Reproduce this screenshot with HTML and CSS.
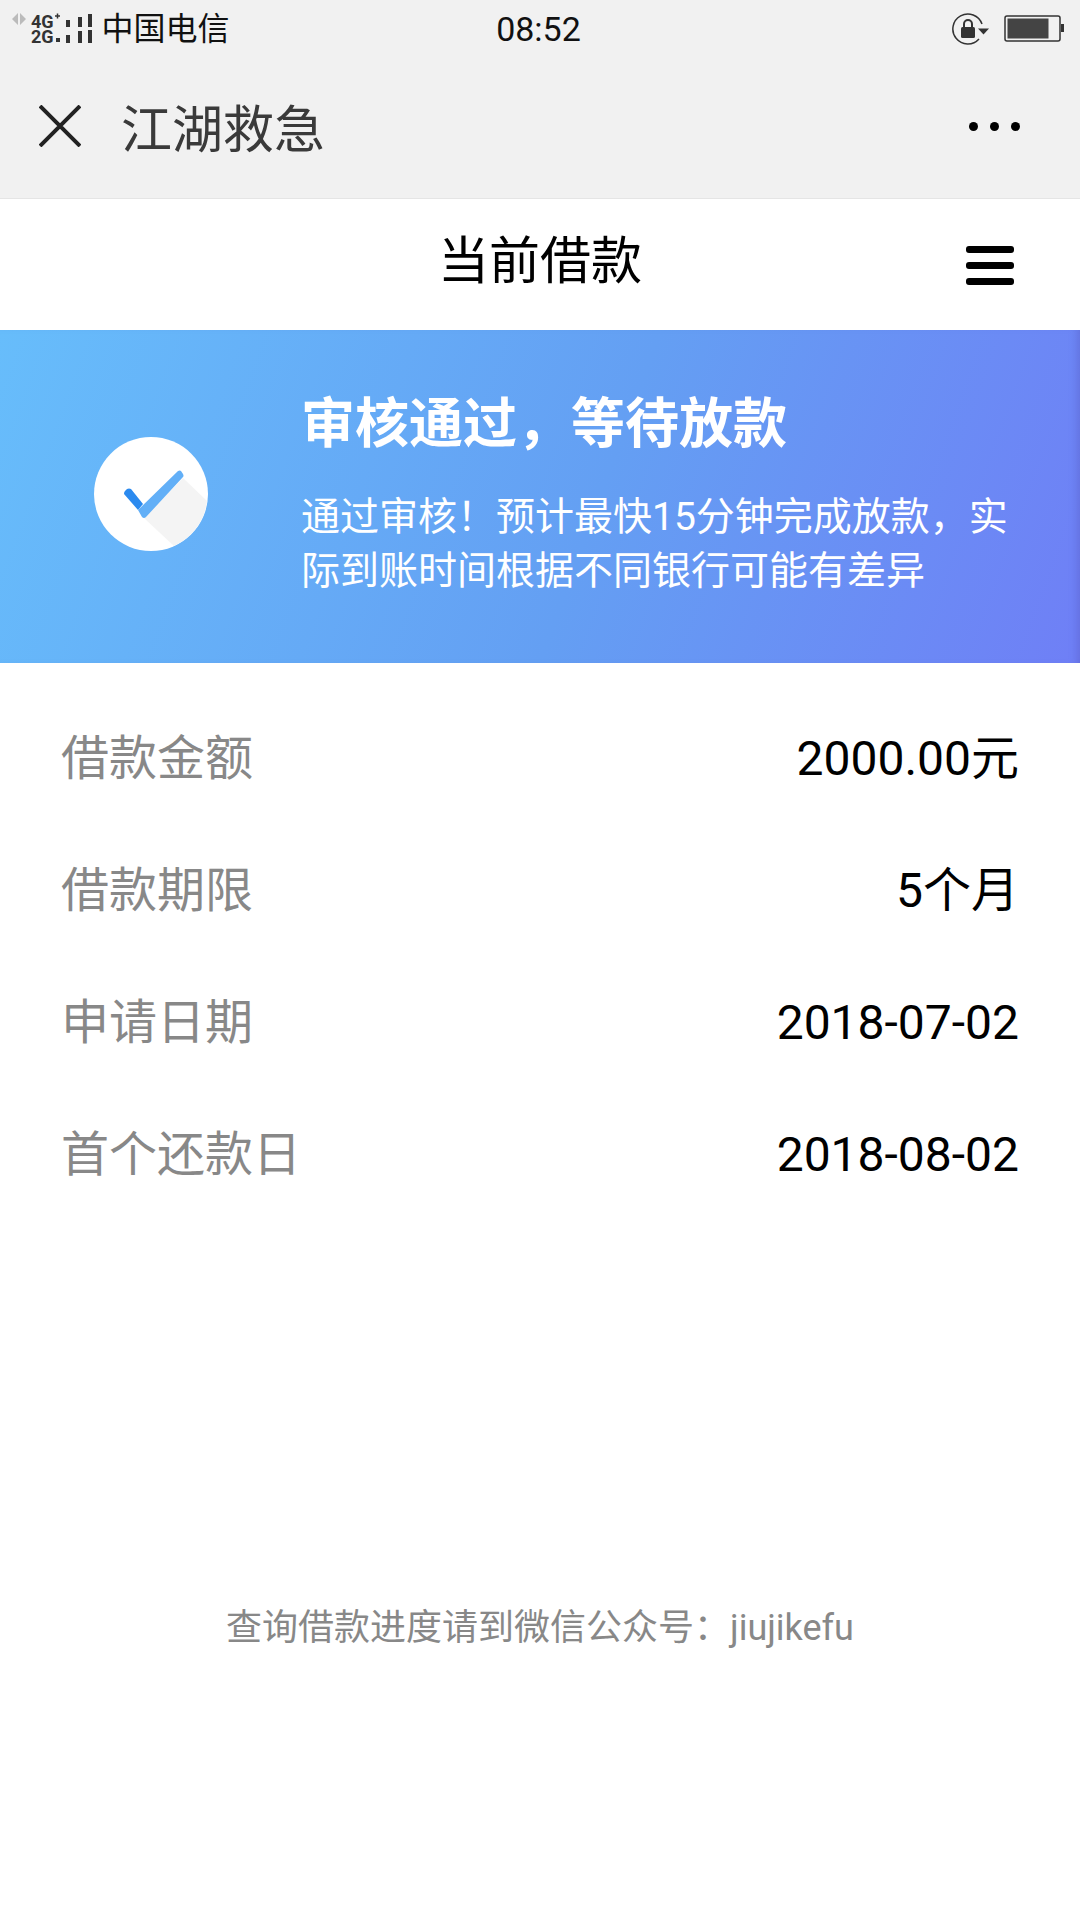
FILE: index.html
```html
<!DOCTYPE html>
<html><head>
<meta charset="utf-8">
<title>当前借款</title>
<link rel="stylesheet" href="styles.css">
</head>
<body>

<div class="status">
	<div class="status-left">
		<svg class="arrows" width="14" height="12" viewBox="0 0 14 12">
			<path d="M6 0v12L0 6zM8 0v12l6-6z" fill="#bbb"/>
		</svg>
		<div class="net">4G<br>2G</div>
		<svg class="bars" width="38" height="32" viewBox="0 0 38 32">
			<path d="M0 3h5M2.500 .5v5" stroke="#333" stroke-width="1.500" fill="none"/>
			<rect x="1" y="25" width="4" height="4" fill="#333"/>
			<rect x="11" y="7" width="4" height="7" fill="#333"/>
			<rect x="11" y="22" width="4" height="8" fill="#333"/>
			<rect x="23" y="4" width="4" height="10" fill="#333"/>
			<rect x="23" y="18" width="4" height="12" fill="#333"/>
			<rect x="33" y="1" width="4" height="13" fill="#333"/>
			<rect x="33" y="17" width="4" height="13" fill="#333"/>
		</svg>
		<span class="carrier">中国电信</span>
	</div>
	<div class="clock">08:52</div>
	<div class="status-right">
		<svg width="37" height="32" viewBox="0 0 37 32">
			<path d="M27 26A15 15 0 1 1 30 11" fill="none" stroke="#333" stroke-width="1.500"/>
			<rect x="9" y="14" width="14" height="11" rx="1.500" fill="#333"/>
			<path d="M12 14v-3a4 4 0 0 1 8 0v3" fill="none" stroke="#333" stroke-width="2"/>
			<path d="M26 15.500h11l-5.500 6z" fill="#333"/>
		</svg>
		<svg class="battery" width="60" height="27" viewBox="0 0 60 27">
			<rect x="1" y="1" width="55" height="25" rx="2" fill="none" stroke="#333" stroke-width="1.500"/>
			<rect x="3.500" y="3.500" width="41" height="20" fill="#444"/>
			<rect x="57" y="9" width="3" height="8" fill="#333"/>
		</svg>
	</div>
</div>

<div class="topbar">
	<svg class="close" width="42" height="42" viewBox="0 0 42 42">
		<path d="M1 1L41 41M41 1L1 41" stroke="#222" stroke-width="4" fill="none"/>
	</svg>
	<div class="app-name">江湖救急</div>
	<div class="dots"><i></i><i></i><i></i></div>
</div>

<div class="title-row">
	<div class="title">当前借款</div>
	<div class="burger"><i></i><i></i><i></i></div>
</div>

<div class="banner">
	<div class="badge">
		<svg width="114" height="114" viewBox="0 0 114 114">
			<circle cx="57" cy="57" r="57" fill="#fff"/>
			<path d="M89 41L113 64A57 57 0 0 1 80 109L50 81z" fill="#f4f4f4"/>
			<path d="M30 57q0-2 1-3l2-2q2-1 4 0L49 67 44 73z" fill="#2b8aef"/>
			<path d="M84 34q2-1 3 0l2 3q1 2 0 3L52 80q-2 2-4 0l-4-7z" fill="#62aff7"/>
		</svg>
	</div>
	<div class="banner-text">
		<h2>审核通过，等待放款</h2>
		<p>通过审核！预计最快15分钟完成放款，实际到账时间根据不同银行可能有差异</p>
	</div>
</div>

<div class="rows">
	<div class="row"><span class="label">借款金额</span><span class="value">2000.00元</span></div>
	<div class="row"><span class="label">借款期限</span><span class="value">5个月</span></div>
	<div class="row"><span class="label">申请日期</span><span class="value">2018-07-02</span></div>
	<div class="row"><span class="label">首个还款日</span><span class="value">2018-08-02</span></div>
</div>

<p class="note">查询借款进度请到微信公众号：jiujikefu</p>

</body>
</html>
```

FILE: styles.css
```css
body
{
	margin: 0;
	width: 1080px;
	height: 1920px;
	overflow: hidden;
	background-color: white;
	font-family: Roboto, "Noto Sans CJK SC", sans-serif;
}
.status
{
	height: 60px;
	background-color: #f1f1f1;
	display: grid;
	grid-template-columns: 1fr auto 1fr;
	align-items: center;
	padding: 0 16px 3px 12px;
	box-sizing: border-box;
}
.status-left
{
	display: flex;
	align-items: center;
}
.arrows
{
	margin-bottom: 20px;
}
.net
{
	margin-left: 5px;
	font-size: 18px;
	font-weight: 700;
	line-height: 15px;
	color: #333;
}
.bars
{
	margin-left: 1px;
}
.carrier
{
	font-size: 32px;
	color: #111;
	line-height: 40px;
	margin-left: 9px;
}
.clock
{
	font-size: 34px;
	color: #111;
	margin-left: 1px;
}
.status-right
{
	display: flex;
	justify-content: flex-end;
	align-items: center;
	gap: 15px;
}
.topbar
{
	background-color: #f1f1f1;
	border-bottom: 1px solid #e5e5e5;
	display: flex;
	align-items: center;
	padding: 0 60px 6px 39px;
	box-sizing: border-box;
	height: 139px;
}
.app-name
{
	font-size: 51px;
	color: #3a3a3a;
	margin-left: 40px;
}
.dots
{
	margin-left: auto;
	display: flex;
	gap: 12px;
}
.dots i
{
	width: 9px;
	height: 9px;
	border-radius: 50%;
	background-color: black;
}
.title-row
{
	height: 131px;
	display: flex;
	align-items: center;
	justify-content: center;
	position: relative;
}
.title
{
	font-size: 51px;
	color: black;
	margin-bottom: 15px;
}
.burger
{
	position: absolute;
	right: 66px;
	top: 47px;
	display: flex;
	flex-direction: column;
	gap: 9px;
}
.burger i
{
	width: 48px;
	height: 7px;
	border-radius: 3px;
	background-color: black;
}
.banner
{
	height: 333px;
	background: linear-gradient(110deg, #67bdfb 0%, #649ff3 55%, #6f7ff6 100%);
	box-shadow: inset -8px 0 8px -6px rgba(80, 80, 180, .4);
	display: flex;
	align-items: center;
	padding-left: 94px;
}
.badge
{
	width: 114px;
	height: 114px;
	margin: 0 93px 6px 0;
	flex-shrink: 0;
}
.badge svg
{
	display: block;
}
.banner-text
{
	width: 720px;
	color: white;
	padding-bottom: 6px;
}
.banner-text h2
{
	font-size: 54px;
	font-weight: 700;
	line-height: 70px;
	margin: 0 0 30px;
}
.banner-text p
{
	font-size: 39px;
	line-height: 54px;
	margin: 0;
}
.rows
{
	padding: 30px 61px 0;
}
.row
{
	height: 132px;
	line-height: 60px;
	display: flex;
	align-items: center;
	justify-content: space-between;
}
.label
{
	font-size: 48px;
	color: #888;
}
.value
{
	font-size: 48px;
	color: black;
}
.note
{
	margin: 382px 0 0;
	text-align: center;
	font-size: 36px;
	line-height: 50px;
	color: #888;
}
```
